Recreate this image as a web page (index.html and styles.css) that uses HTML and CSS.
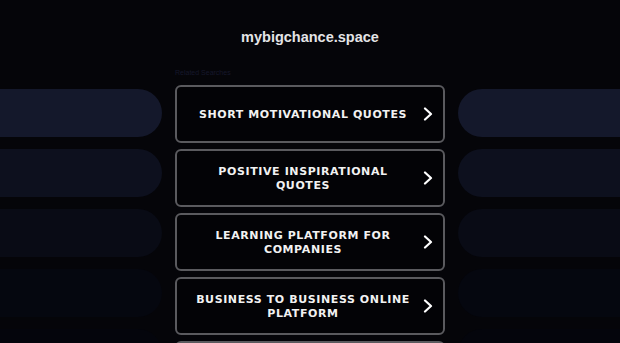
FILE: index.html
```html
<!DOCTYPE html>
<html lang="en">
<head>
  <meta charset="UTF-8">
  <meta name="viewport" content="width=device-width, initial-scale=1.0">
  <title>mybigchance.space</title>
  <link rel="stylesheet" href="styles.css">
</head>
<body>

  <h1 class="domain">mybigchance.space</h1>

  <div class="page">
    <div class="side side-left">
      <div class="bar bar-1"></div>
      <div class="bar bar-2"></div>
      <div class="bar bar-3"></div>
      <div class="bar bar-4"></div>
      <div class="bar bar-5"></div>
    </div>

    <div class="links">
      <div class="label">Related Searches</div>
      <a class="link" href="#">
        <span class="link-text">SHORT MOTIVATIONAL QUOTES</span>
        <svg class="chev" width="10" height="14" viewBox="0 0 10 14"><polyline points="2,1.5 8,7 2,12.5" fill="none" stroke="#fff" stroke-width="2.2" stroke-linecap="round" stroke-linejoin="round"/></svg>
      </a>
      <a class="link" href="#">
        <span class="link-text">POSITIVE INSPIRATIONAL QUOTES</span>
        <svg class="chev" width="10" height="14" viewBox="0 0 10 14"><polyline points="2,1.5 8,7 2,12.5" fill="none" stroke="#fff" stroke-width="2.2" stroke-linecap="round" stroke-linejoin="round"/></svg>
      </a>
      <a class="link" href="#">
        <span class="link-text">LEARNING PLATFORM FOR COMPANIES</span>
        <svg class="chev" width="10" height="14" viewBox="0 0 10 14"><polyline points="2,1.5 8,7 2,12.5" fill="none" stroke="#fff" stroke-width="2.2" stroke-linecap="round" stroke-linejoin="round"/></svg>
      </a>
      <a class="link" href="#">
        <span class="link-text">BUSINESS TO BUSINESS ONLINE PLATFORM</span>
        <svg class="chev" width="10" height="14" viewBox="0 0 10 14"><polyline points="2,1.5 8,7 2,12.5" fill="none" stroke="#fff" stroke-width="2.2" stroke-linecap="round" stroke-linejoin="round"/></svg>
      </a>
      <div class="link link-cut"></div>
    </div>

    <div class="side side-right">
      <div class="bar bar-1"></div>
      <div class="bar bar-2"></div>
      <div class="bar bar-3"></div>
      <div class="bar bar-4"></div>
      <div class="bar bar-5"></div>
    </div>
  </div>

</body>
</html>
```

FILE: styles.css
```css
html, body {
  height: 100%;
}
body {
  margin: 0;
  padding: 0;
  background-color: #050509;
  font-family: "Liberation Sans", Arial, sans-serif;
  overflow: hidden;
}
.domain {
  margin: 0;
  padding-top: 28px;
  font-size: 14.5px;
  line-height: 18px;
  font-weight: bold;
  color: #e4e4e6;
  text-align: center;
}
.page {
  display: grid;
  grid-template-columns: 1fr 270px 1fr;
  column-gap: 13px;
}
.side {
  display: flex;
  flex-direction: column;
  gap: 12px;
  padding-top: 43px;
}
.bar {
  height: 48px;
}
.side-left .bar {
  border-radius: 0 24px 24px 0;
}
.side-right .bar {
  border-radius: 24px 0 0 24px;
}
.bar-1 { background-color: #14182b; }
.bar-2 { background-color: #0d101e; }
.bar-3 { background-color: #090b15; }
.bar-4 { background-color: #05070f; }
.bar-5 { background-color: #04050c; }

.links {
  display: flex;
  flex-direction: column;
  gap: 6px;
  padding-top: 22px;
}
.label {
  font-size: 7px;
  line-height: 10px;
  color: #16182c;
  margin-bottom: 1px;
}
.link {
  display: flex;
  align-items: center;
  height: 54px;
  padding: 0 10px 0 16px;
  border: 2px solid #5a5a5e;
  border-radius: 6px;
  background-color: #030306;
  color: #f2f2f2;
  text-decoration: none;
  gap: 10px;
}
.link-text {
  flex: 1;
  padding-top: 1px;
  text-align: center;
  font-family: "DejaVu Sans", Verdana, sans-serif;
  font-weight: bold;
  font-size: 11px;
  line-height: 14px;
  letter-spacing: 0.6px;
}
.chev {
  flex-shrink: 0;
}
```
